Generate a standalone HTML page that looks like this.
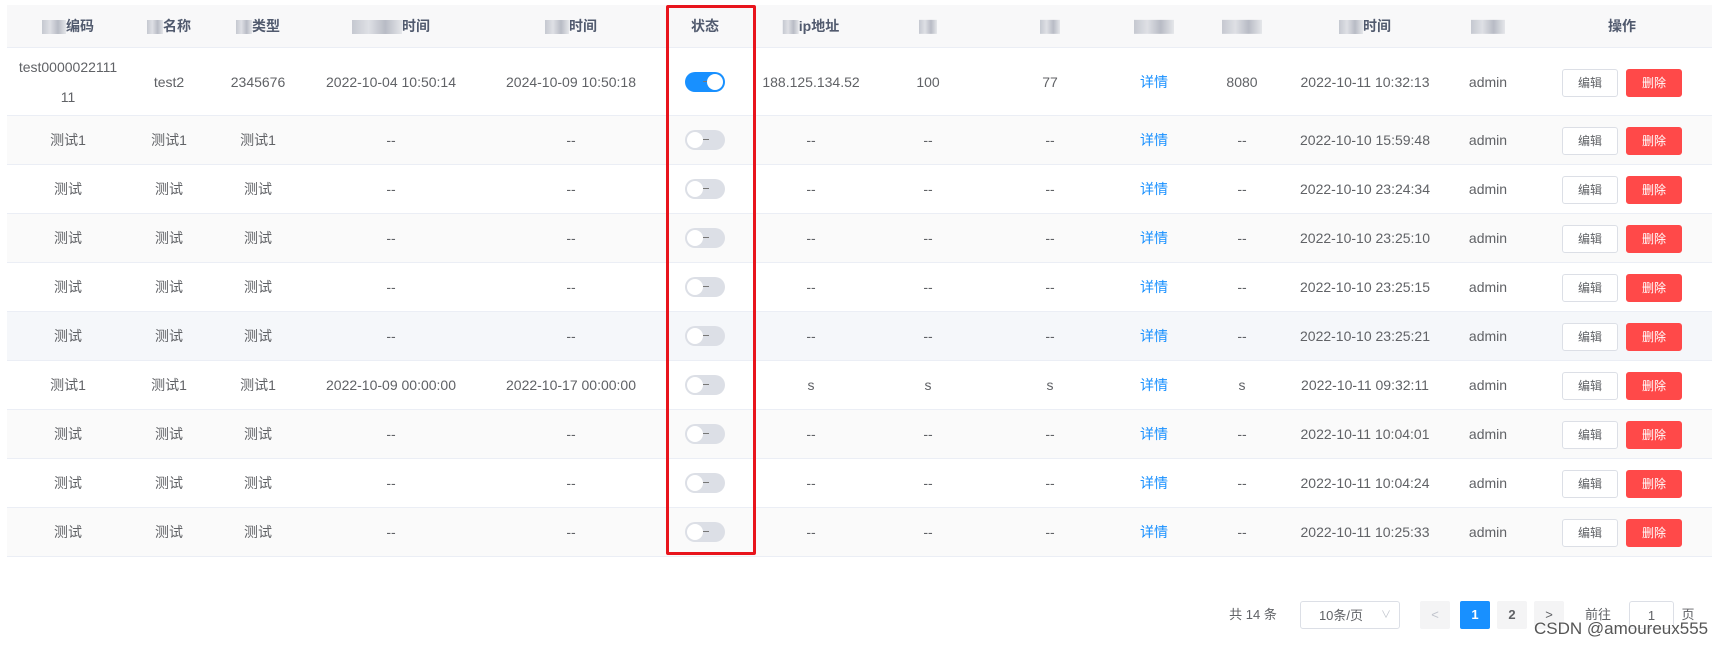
<!DOCTYPE html>
<html><head><meta charset="utf-8"><style>
*{margin:0;padding:0;box-sizing:border-box}
body{width:1712px;height:645px;background:#fff;position:relative;overflow:hidden;font-family:"Liberation Sans","Noto Sans CJK SC",sans-serif;font-size:14px;color:#606266}
.row{position:absolute;left:7px;right:0;border-bottom:1px solid #ebeef5}
.c{position:absolute;transform:translate(-50%,-50%);top:50%;white-space:nowrap;text-align:center}
.hd{background:#f8f8f9;color:#515a6e;font-weight:bold;top:5px;height:43px}
.blur{display:inline-block;height:14px;background:linear-gradient(90deg,#b8bcc6,#d8dae0,#a8acb8,#e0e2e6);vertical-align:middle;opacity:.8}
.sw{width:40px;height:20px;border-radius:10px;background:#dcdfe6;position:relative;display:block}
.sw::after{content:"";position:absolute;left:2px;top:2px;width:16px;height:16px;border-radius:50%;background:#fff}
.sw.on{background:#1890ff}.sw.on::after{left:22px}
.sw i{position:absolute;left:18px;top:9px;width:6px;height:1px;background:#777}
.b{display:inline-block;width:56px;height:28px;line-height:26px;font-size:12px;border:1px solid #dcdfe6;border-radius:3px;background:#fff;color:#606266;text-align:center}
.r{background:#ff4949;border-color:#ff4949;color:#fff;margin-left:8px}
.lnk{color:#1890ff}
#red{position:absolute;left:666px;top:5px;width:90px;height:550px;border:3px solid #e8141c;border-radius:2px}
.pg{position:absolute;top:601px;height:28px;line-height:28px;font-size:13px;text-align:center}
</style></head><body>
<div class="row hd">
<span class="c" style="left:61px"><span class="blur" style="width:24px"></span>编码</span>
<span class="c" style="left:162px"><span class="blur" style="width:16px"></span>名称</span>
<span class="c" style="left:251px"><span class="blur" style="width:16px"></span>类型</span>
<span class="c" style="left:384px"><span class="blur" style="width:50px"></span>时间</span>
<span class="c" style="left:564px"><span class="blur" style="width:24px"></span>时间</span>
<span class="c" style="left:698px">状态</span>
<span class="c" style="left:804px"><span class="blur" style="width:16px"></span>ip地址</span>
<span class="c" style="left:921px"><span class="blur" style="width:18px"></span></span>
<span class="c" style="left:1043px"><span class="blur" style="width:20px"></span></span>
<span class="c" style="left:1147px"><span class="blur" style="width:40px"></span></span>
<span class="c" style="left:1235px"><span class="blur" style="width:40px"></span></span>
<span class="c" style="left:1358px"><span class="blur" style="width:24px"></span>时间</span>
<span class="c" style="left:1481px"><span class="blur" style="width:34px"></span></span>
<span class="c" style="left:1615px">操作</span>
</div>
<div id="rows"></div>
<div id="red"></div>
<div class="pg" style="left:1223px;width:60px;color:#606266">共 14 条</div>
<div class="pg" style="left:1300px;width:100px;border:1px solid #dcdfe6;border-radius:3px;padding-right:18px">10条/页<span style="position:absolute;right:8px;color:#c0c4cc;font-size:10px">∨</span></div>
<div class="pg" style="left:1420px;width:30px;background:#f4f4f5;color:#c0c4cc;border-radius:2px">&lt;</div>
<div class="pg" style="left:1460px;width:30px;background:#1890ff;color:#fff;font-weight:bold;border-radius:2px">1</div>
<div class="pg" style="left:1497px;width:30px;background:#f4f4f5;color:#606266;font-weight:bold;border-radius:2px">2</div>
<div class="pg" style="left:1534px;width:30px;background:#f4f4f5;color:#606266;border-radius:2px">&gt;</div>
<div class="pg" style="left:1583px;width:30px">前往</div>
<div class="pg" style="left:1629px;width:45px;border:1px solid #dcdfe6;border-radius:3px">1</div>
<div class="pg" style="left:1680px;width:16px">页</div>
<div style="position:absolute;left:1534px;top:619px;font-size:17px;color:#555;text-shadow:0 0 2px #fff,0 0 2px #fff">CSDN @amoureux555</div>
<script>
var X=[68,169,258,391,571,705,811,928,1050,1154,1242,1365,1488,1622];
var D=[
["test0000022111<br>11","test2","2345676","2022-10-04 10:50:14","2024-10-09 10:50:18",1,"188.125.134.52","100","77","8080","2022-10-11 10:32:13"],
["测试1","测试1","测试1","--","--",0,"--","--","--","--","2022-10-10 15:59:48"],
["测试","测试","测试","--","--",0,"--","--","--","--","2022-10-10 23:24:34"],
["测试","测试","测试","--","--",0,"--","--","--","--","2022-10-10 23:25:10"],
["测试","测试","测试","--","--",0,"--","--","--","--","2022-10-10 23:25:15"],
["测试","测试","测试","--","--",0,"--","--","--","--","2022-10-10 23:25:21"],
["测试1","测试1","测试1","2022-10-09 00:00:00","2022-10-17 00:00:00",0,"s","s","s","s","2022-10-11 09:32:11"],
["测试","测试","测试","--","--",0,"--","--","--","--","2022-10-11 10:04:01"],
["测试","测试","测试","--","--",0,"--","--","--","--","2022-10-11 10:04:24"],
["测试","测试","测试","--","--",0,"--","--","--","--","2022-10-11 10:25:33"]];
var h="";
D.forEach(function(d,i){
 var top=i==0?48:116+(i-1)*49, ht=i==0?68:49;
 var bg=i==5?"#f5f7fa":(i%2?"#fafafa":"#fff");
 var v=[d[0],d[1],d[2],d[3],d[4],'<span class="sw'+(d[5]?' on':'')+'"><i></i></span>',d[6],d[7],d[8],'<span class="lnk">详情</span>',d[9],d[10],"admin",'<span class="b">编辑</span><span class="b r">删除</span>'];
 h+='<div class="row" style="top:'+top+'px;height:'+ht+'px;background:'+bg+'">';
 v.forEach(function(t,j){h+='<span class="c" style="left:'+(X[j]-7)+'px;line-height:30px">'+t+'</span>';});
 h+='</div>';
});
document.getElementById("rows").innerHTML=h;
</script>
</body></html>
